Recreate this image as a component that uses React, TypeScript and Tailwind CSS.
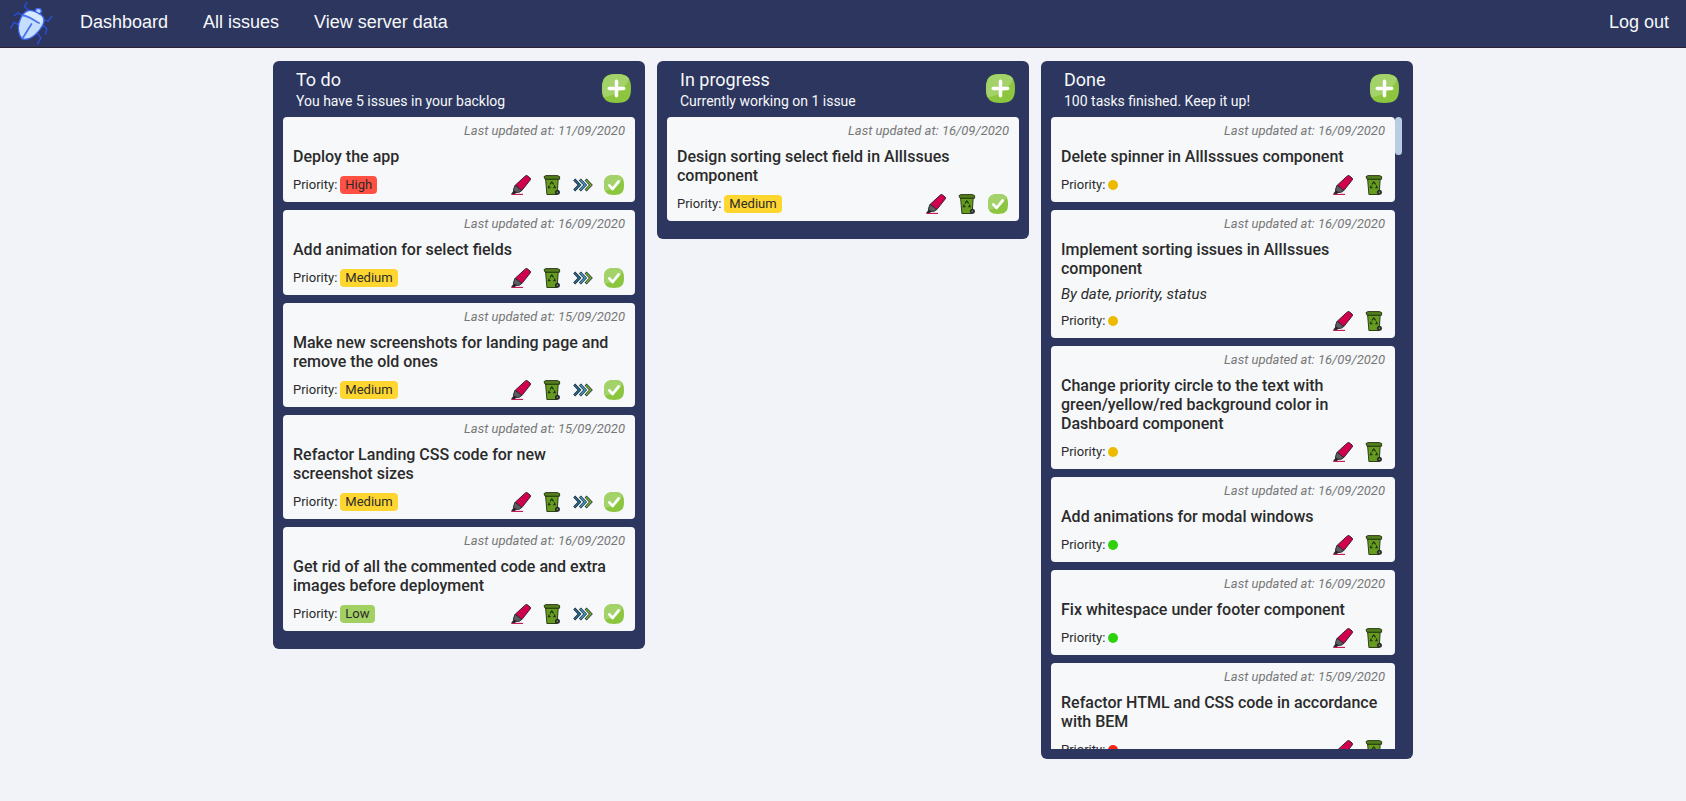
import React from "react";

type Priority = "High" | "Medium" | "Low";

interface Issue {
  title: string;
  updated: string;
  priority: Priority;
  summary?: string;
}

interface ColumnProps {
  title: string;
  subtitle: string;
  issues: Issue[];
  canStart?: boolean;
  finished?: boolean;
}

const todo: Issue[] = [
  { title: "Deploy the app", updated: "11/09/2020", priority: "High" },
  { title: "Add animation for select fields", updated: "16/09/2020", priority: "Medium" },
  { title: "Make new screenshots for landing page and remove the old ones", updated: "15/09/2020", priority: "Medium" },
  { title: "Refactor Landing CSS code for new screenshot sizes", updated: "15/09/2020", priority: "Medium" },
  { title: "Get rid of all the commented code and extra images before deployment", updated: "16/09/2020", priority: "Low" },
];

const inProgress: Issue[] = [
  { title: "Design sorting select field in AllIssues component", updated: "16/09/2020", priority: "Medium" },
];

const done: Issue[] = [
  { title: "Delete spinner in AllIsssues component", updated: "16/09/2020", priority: "Medium" },
  {
    title: "Implement sorting issues in AllIssues component",
    updated: "16/09/2020",
    priority: "Medium",
    summary: "By date, priority, status",
  },
  {
    title: "Change priority circle to the text with green/yellow/red background color in Dashboard component",
    updated: "16/09/2020",
    priority: "Medium",
  },
  { title: "Add animations for modal windows", updated: "16/09/2020", priority: "Low" },
  { title: "Fix whitespace under footer component", updated: "16/09/2020", priority: "Low" },
  { title: "Refactor HTML and CSS code in accordance with BEM", updated: "15/09/2020", priority: "High" },
];

const labelColor: Record<Priority, string> = {
  High: "bg-[#ff5043]",
  Medium: "bg-[#ffd530]",
  Low: "bg-[#a3d063]",
};

const dotColor: Record<Priority, string> = {
  High: "bg-[#fb2314]",
  Medium: "bg-[#ecba00]",
  Low: "bg-[#2fd10c]",
};

function BugLogo() {
  return (
    <svg viewBox="0 0 44 44" className="h-11 w-11" aria-hidden="true">
      <g fill="none" stroke="#2a4bcb" strokeWidth="1.6" strokeLinejoin="round" strokeLinecap="round">
        <path d="M18.500 8.500 14.500 4.500 16.800.6" />
        <path d="M13.500 14 8.500 11 4.300 13.300" />
        <path d="M9 23 4 20.500.8 26" />
        <path d="M33 18 38.500 19 41.800 14.200" />
        <path d="M33 23.500 36.800 26.500 35.500 32" />
        <path d="M27 30.500 30.800 36 27.500 42" />
      </g>
      <path
        d="M17.500 8.800C22 7 32 11.500 33.800 16.500C35 21 31 27 25.500 32.500C21 36.500 16 38 12 36.800C9 33 7.800 27 8.800 21.500C10.500 15.500 13 10.500 17.500 8.800Z"
        fill="#c6defe"
        stroke="#3c66f0"
        strokeWidth="1.300"
      />
      <path d="M18.500 10C23 9 30.500 12.500 32.300 16.500C32.500 18 32 20 31 21.500L14 13.500C15.200 11.500 16.800 10.300 18.500 10Z" fill="#d9e9ff" />
      <path d="M25.500 9.500 26.300 6.300 30.500 6.800 31.500 9.500 29.500 12Z" fill="#bcd7ff" stroke="#3c66f0" strokeWidth="1.300" strokeLinejoin="round" />
      <path d="M13 13.500C18 13.500 24 18.500 29 21M21.500 22 12.800 36" fill="none" stroke="#4a74ec" strokeWidth="1.800" strokeLinecap="round" />
    </svg>
  );
}

function GreenTile() {
  return (
    <>
      <path d="M15 0C26 0 30 4 30 15S26 30 15 30 0 26 0 15 4 0 15 0Z" fill="#8cc63f" />
      <path d="M15 0C22 0 26 1.500 28 5C24 16 15 22 1.500 24C.5 21.500 0 18.500 0 15C0 4 4 0 15 0Z" fill="#a3d26a" />
    </>
  );
}

function PlusIcon() {
  return (
    <svg viewBox="0 0 30 30" className="h-[29px] w-[29px]" aria-hidden="true">
      <GreenTile />
      <path d="M15 7.500V22.500M7.500 15H22.500" stroke="#fff" strokeWidth="3.600" strokeLinecap="round" />
    </svg>
  );
}

function CheckIcon() {
  return (
    <svg viewBox="0 0 30 30" className="h-5 w-5" aria-hidden="true">
      <GreenTile />
      <path d="M8 15.500 13 21 22 9.500" fill="none" stroke="#fff" strokeWidth="4" strokeLinecap="round" strokeLinejoin="round" />
    </svg>
  );
}

function MarkerIcon() {
  return (
    <svg viewBox="0 0 20 20" className="h-5 w-5" aria-hidden="true">
      <path d="M4.200 10.300 14.400.9Q15.400.1 16.400.8L19.100 3Q20 3.900 19.200 5L10.800 15.600Z" fill="#d1004f" stroke="#2b1722" strokeWidth=".9" strokeLinejoin="round" />
      <path d="M4 10.200 10.800 15.500 8.400 17.200 3.400 17.600 2.400 14.800Z" fill="#5a5c60" stroke="#25262a" strokeWidth=".9" strokeLinejoin="round" />
      <path d="M2.800 15.200 5.800 17.500 3.500 19.200H0Z" fill="#25262a" />
      <path d="M.4 19.400H12" stroke="#c0104f" strokeWidth="1.100" />
    </svg>
  );
}

function BinIcon() {
  return (
    <svg viewBox="0 0 20 20" className="h-5 w-5" aria-hidden="true">
      <path d="M3.600 4H16.200L15.200 19.500H4.900Z" fill="#659c20" stroke="#243010" strokeWidth=".9" />
      <path d="M2 1.600 4 .6H15.500L17.600 1.600V4.200H3Z" fill="#527f1c" stroke="#243010" strokeWidth=".9" strokeLinejoin="round" />
      <path d="M8 9.400 9.800 7 11.600 9.400M12.300 10.400 13.200 12.700H11.200M8.600 12.700H6.400L7.300 10.400" fill="none" stroke="#1d2b0e" strokeWidth="1.100" />
      <circle cx="15.400" cy="17.200" r="2.500" fill="#2a2f2a" />
      <circle cx="15.400" cy="17.200" r=".8" fill="#858c84" />
    </svg>
  );
}

function ChevronsIcon() {
  return (
    <svg viewBox="0 0 20 20" className="h-5 w-5" aria-hidden="true">
      <g fill="none" strokeLinejoin="miter">
        <g stroke="#20303c" strokeWidth="2.800">
          <path d="M1.200 4.500 6.500 10 1.200 15.500" />
          <path d="M6.900 4.500 12.200 10 6.900 15.500" />
          <path d="M12.600 4.500 17.900 10 12.600 15.500" />
        </g>
        <path d="M1.600 4.900 6.500 10 1.600 15.100" stroke="#28658c" strokeWidth="1.500" />
        <path d="M7.300 4.900 12.200 10 7.300 15.100" stroke="#3c9cc0" strokeWidth="1.500" />
        <path d="M13 4.900 17.900 10 13 15.100" stroke="#78ab2c" strokeWidth="1.500" />
      </g>
    </svg>
  );
}

function IssueCard({ issue, canStart, finished }: { issue: Issue; canStart?: boolean; finished?: boolean }) {
  return (
    <li className="mb-2 rounded bg-[#f6f8fa] px-2.5 pt-1.5 pb-[7px] text-[#2b2b2b]">
      <p className="text-right text-[13px] leading-4 text-[#777] italic">Last updated at: {issue.updated}</p>
      <h3 className="mt-2 text-base leading-[19px] font-medium">{issue.title}</h3>
      {issue.summary && <p className="mt-2 text-[15px] leading-4 italic">{issue.summary}</p>}
      <div className="mt-[9px] flex h-5 items-center justify-between">
        <div className="flex items-center gap-[3px] text-[13px] leading-[18px]">
          <span>Priority:</span>
          {finished ? (
            <span className={`h-2.5 w-2.5 rounded-full ${dotColor[issue.priority]}`} role="img" aria-label={issue.priority} />
          ) : (
            <span className={`rounded px-[5px] ${labelColor[issue.priority]}`}>{issue.priority}</span>
          )}
        </div>
        <div className="flex gap-[11px] pr-px">
          <button type="button" aria-label="Edit issue"><MarkerIcon /></button>
          <button type="button" aria-label="Delete issue"><BinIcon /></button>
          {canStart && <button type="button" aria-label="Move to in progress"><ChevronsIcon /></button>}
          {!finished && <button type="button" aria-label="Mark as done"><CheckIcon /></button>}
        </div>
      </div>
    </li>
  );
}

function Column({ title, subtitle, issues, canStart, finished }: ColumnProps) {
  return (
    <section className="min-w-0 flex-1 rounded-md bg-[#2c365e] px-2.5 pb-2.5">
      <header className="flex h-14 items-start justify-between pt-2 pr-1 pl-[13px] text-[#f6f8fa]">
        <div>
          <h2 className="text-lg leading-[22px]">{title}</h2>
          <p className="text-sm leading-5">{subtitle}</p>
        </div>
        <button type="button" aria-label={`Add issue to ${title}`} className="pt-[5px]"><PlusIcon /></button>
      </header>
      <div className="relative">
        <ul className={finished ? "max-h-[calc(100vh-169px)] overflow-y-auto pr-2 [scrollbar-width:none]" : ""}>
          {issues.map((issue) => (
            <IssueCard key={issue.title} issue={issue} canStart={canStart} finished={finished} />
          ))}
        </ul>
        {finished && <div className="absolute top-0 right-px h-[38px] w-[7px] rounded bg-[#b9cde5]" />}
      </div>
    </section>
  );
}

export default function App() {
  return (
    <div className="min-h-screen bg-[#f1f3f9] font-['Roboto',sans-serif]">
      <nav className="flex h-12 items-center border-b border-[#2b2433] bg-[#2c365e] pr-[17px] pl-2.5 font-['Liberation_Sans',Arial,sans-serif] text-lg leading-6 text-[#f6f8fa]">
        <a href="#home" aria-label="Home" className="mr-[26px]"><BugLogo /></a>
        <div className="flex grow gap-[35px] pb-1">
          <a href="#dashboard">Dashboard</a>
          <a href="#issues">All issues</a>
          <a href="#server">View server data</a>
        </div>
        <a href="#logout" className="pb-1">Log out</a>
      </nav>
      <main className="mx-auto flex max-w-[1140px] items-start gap-3 pt-[13px]">
        <Column title="To do" subtitle="You have 5 issues in your backlog" issues={todo} canStart />
        <Column title="In progress" subtitle="Currently working on 1 issue" issues={inProgress} />
        <Column title="Done" subtitle="100 tasks finished. Keep it up!" issues={done} finished />
      </main>
    </div>
  );
}
